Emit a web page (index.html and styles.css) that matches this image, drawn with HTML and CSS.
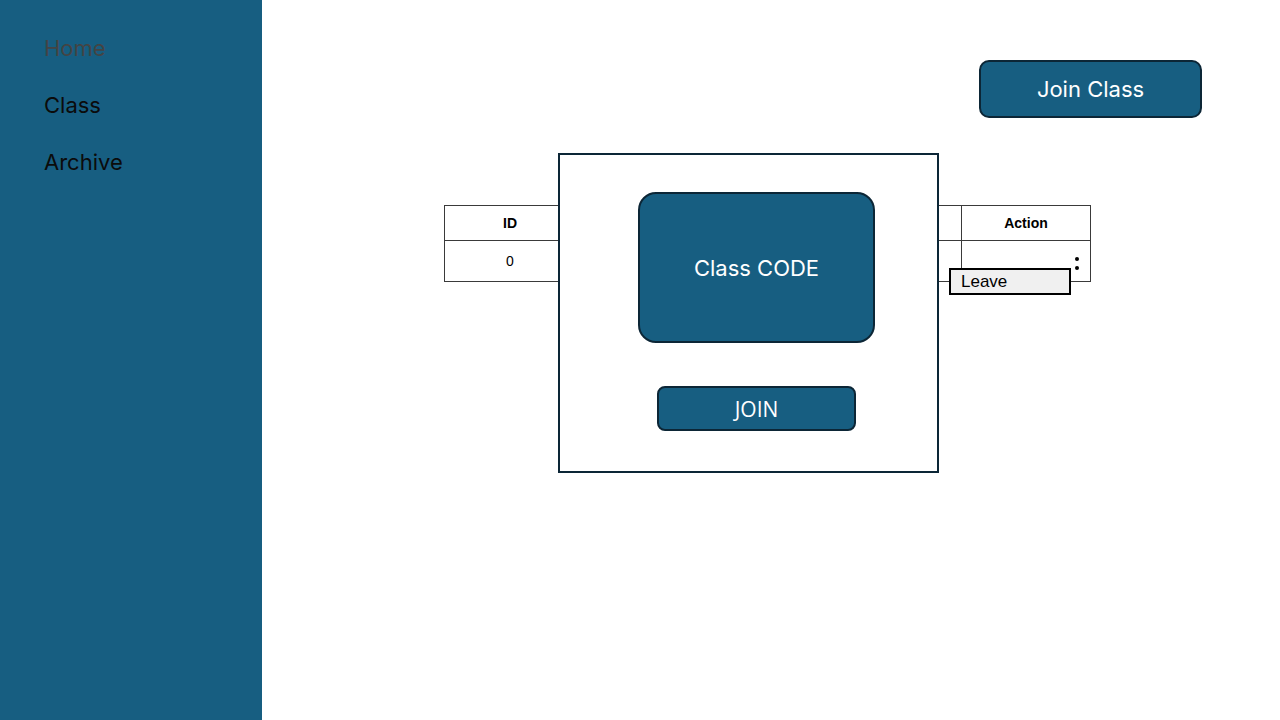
FILE: index.html
```html
<!DOCTYPE html>
<html lang="en">
<head>
    <meta charset="UTF-8">
    <meta name="viewport" content="width=device-width, initial-scale=1.0">
    <title>Class</title>
    <link rel="stylesheet" href="styles.css">
</head>
<body>
    <div class="app">
        <nav class="sidebar">
            <a class="nav-link nav-link-muted" href="#">Home</a>
            <a class="nav-link" href="#">Class</a>
            <a class="nav-link" href="#">Archive</a>
        </nav>

        <main class="content">
            <div class="toolbar">
                <button class="join-class-btn">Join Class</button>
            </div>

            <div class="table-wrap">
                <table class="class-table">
                    <thead>
                        <tr>
                            <th class="col-id">ID</th>
                            <th class="col-name">Name</th>
                            <th class="col-teacher">Teacher</th>
                            <th class="col-action">Action</th>
                        </tr>
                    </thead>
                    <tbody>
                        <tr>
                            <td>0</td>
                            <td></td>
                            <td></td>
                            <td class="action-cell">
                                <span class="kebab"><i></i><i></i></span>
                            </td>
                        </tr>
                    </tbody>
                </table>
                <div class="row-menu">Leave</div>
            </div>

            <!-- модалка поверх таблицы -->
            <div class="join-modal">
                <div class="code-box">Class CODE</div>
                <button class="join-btn">JOIN</button>
            </div>
        </main>
    </div>
</body>
</html>
```

FILE: styles.css
```css
body {
    margin: 0;
    font-family: Inter, "Noto Sans", sans-serif;
    background: #fff;
}
.app {
    display: flex;
    width: 1280px;
    height: 720px;
    overflow: hidden;
}
.sidebar {
    width: 262px;
    flex-shrink: 0;
    background: #175e81;
    padding: 35px 0 0 44px;
    box-sizing: border-box;
    display: flex;
    flex-direction: column;
    gap: 31px;
}
.nav-link {
    font-size: 22px;
    line-height: 26px;
    color: #0b0b0b;
    text-decoration: none;
}
.nav-link-muted {
    color: #444;
}
.content {
    flex: 1;
    position: relative;
}
.toolbar {
    display: flex;
    justify-content: flex-end;
    padding: 60px 78px 0 0;
}
.join-class-btn {
    width: 223px;
    height: 58px;
    background: #175e81;
    border: 2px solid #0c2636;
    border-radius: 10px;
    color: #fff;
    font-family: Inter, sans-serif;
    font-size: 22px;
    cursor: pointer;
}
.table-wrap {
    position: relative;
    margin: 87px 0 0 182px;
    width: 643px;
}
.class-table {
    border-collapse: collapse;
    table-layout: fixed;
    width: 643px;
    font-family: "Liberation Sans", Arial, sans-serif;
    font-size: 14px;
    color: #000;
}
.class-table th,
.class-table td {
    border: 1px solid #3a3a3a;
    text-align: center;
    padding: 0;
}
.class-table th {
    height: 34px;
    font-weight: bold;
}
.class-table td {
    height: 40px;
}
.col-id { width: 130px; }
.col-name { width: 254px; }
.col-teacher { width: 130px; }
.col-action { width: 128px; }
.action-cell {
    text-align: right !important;
    padding-right: 11px !important;
}
.kebab {
    display: inline-flex;
    flex-direction: column;
    gap: 5px;
    vertical-align: middle;
    margin-top: 4px;
}
.kebab i {
    width: 4px;
    height: 4px;
    border-radius: 50%;
    background: #000;
}
.row-menu {
    position: absolute;
    left: 505px;
    top: 63px;
    width: 122px;
    height: 27px;
    box-sizing: border-box;
    border: 2px solid #000;
    background: #f0f0f0;
    font-family: "Liberation Sans", Arial, sans-serif;
    font-size: 17px;
    line-height: 23px;
    padding-left: 10px;
}
.join-modal {
    position: absolute;
    left: 296px;
    top: 153px;
    width: 381px;
    height: 320px;
    box-sizing: border-box;
    border: 2px solid #0c2636;
    background: #fff;
    display: flex;
    flex-direction: column;
    align-items: center;
    padding: 37px 0 0 16px;
    gap: 43px;
}
.code-box {
    width: 237px;
    height: 151px;
    box-sizing: border-box;
    background: #175e81;
    border: 2px solid #0c2636;
    border-radius: 18px;
    color: #fff;
    font-size: 22px;
    display: flex;
    align-items: center;
    justify-content: center;
}
.join-btn {
    width: 199px;
    height: 45px;
    background: #175e81;
    border: 2px solid #0c2636;
    border-radius: 8px;
    color: #fff;
    font-family: "Open Sans", sans-serif;
    font-size: 21px;
    padding: 0;
    cursor: pointer;
}
```
